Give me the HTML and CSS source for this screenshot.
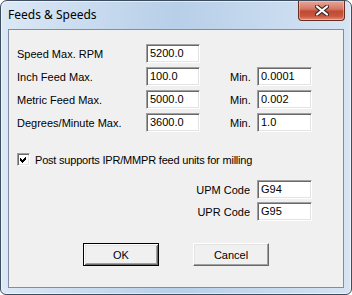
FILE: index.html
```html
<!DOCTYPE html>
<html>
<head>
<meta charset="utf-8">
<link rel="stylesheet" href="styles.css">
</head>
<body>
<div class="window">
  <div class="titlebar">
    <span class="title">Feeds &amp; Speeds</span>
    <div class="close">
      <svg width="14" height="11" viewBox="0 0 14 11">
        <path d="M2 1.5 L12 9.5 M12 1.5 L2 9.5" stroke="#3b2a26" stroke-width="4.2" stroke-linecap="round"/>
        <path d="M2 1.5 L12 9.5 M12 1.5 L2 9.5" stroke="#ffffff" stroke-width="2.2" stroke-linecap="round"/>
      </svg>
    </div>
  </div>
  <div class="client">
    <div class="form">
      <span class="label">Speed Max. RPM</span>
      <span class="edit">5200.0</span>
      <span></span><span></span><span></span>

      <span class="label">Inch Feed Max.</span>
      <span class="edit">100.0</span>
      <span></span>
      <span class="label">Min.</span>
      <span class="edit">0.0001</span>

      <span class="label">Metric Feed Max.</span>
      <span class="edit">5000.0</span>
      <span></span>
      <span class="label">Min.</span>
      <span class="edit">0.002</span>

      <span class="label">Degrees/Minute Max.</span>
      <span class="edit">3600.0</span>
      <span></span>
      <span class="label">Min.</span>
      <span class="edit">1.0</span>
    </div>

    <div class="check-row">
      <span class="checkbox">
        <svg width="9" height="9" viewBox="0 0 9 9" shape-rendering="crispEdges">
          <polygon points="1,3 3,5 7,1 7,4 3,8 1,6" fill="#000"/>
        </svg>
      </span>
      <span class="label check-label">Post supports IPR/MMPR feed units for milling</span>
    </div>

    <div class="codes">
      <span class="label">UPM Code</span>
      <span class="edit">G94</span>
      <span class="label">UPR Code</span>
      <span class="edit">G95</span>
    </div>

    <div class="buttons">
      <button class="btn default">OK</button>
      <button class="btn">Cancel</button>
    </div>
  </div>
</div>
</body>
</html>
```
FILE: styles.css
```css
html, body {
  margin: 0;
  padding: 0;
  background: #ffffff;
}

.window {
  box-sizing: border-box;
  width: 352px;
  height: 295px;
  border: 1px solid #3d4d60;
  border-radius: 7px 7px 6px 6px;
  background: linear-gradient(to right, #dce8f5 0%, #c9dbef 25%, #b7cfe8 50%, #c6d9ee 75%, #d6e4f3 100%);
  box-shadow: inset 0 0 0 1px rgba(255, 255, 255, 0.55);
  overflow: hidden;
}

.titlebar {
  height: 28px;
  display: flex;
  justify-content: space-between;
  align-items: flex-start;
}

.title {
  font-family: "Noto Sans", "Open Sans", sans-serif;
  font-size: 12px;
  color: #000;
  margin-left: 7px;
  margin-top: 6px;
  line-height: 16px;
}

.close {
  width: 45px;
  height: 19px;
  margin-right: 6px;
  border: 1px solid #6a2b20;
  border-top: none;
  border-radius: 0 0 4px 4px;
  background: linear-gradient(to bottom, #e8a597 0%, #d67a68 40%, #c24a35 55%, #c9563f 80%, #e1907b 100%);
  box-shadow: inset 0 0 0 1px rgba(255, 220, 210, 0.45);
  display: flex;
  align-items: center;
  justify-content: center;
}

.client {
  box-sizing: border-box;
  margin: 0 7px;
  height: 259px;
  border: 1px solid #7f8fa3;
  background: #f0f0f0;
  padding: 14px 0 0 8px;
  font-family: "Liberation Sans", Arial, sans-serif;
  font-size: 11px;
  color: #000;
}

.label {
  white-space: nowrap;
}

.check-label {
  letter-spacing: -0.2px;
}

.form {
  display: grid;
  grid-template-columns: 129px 54px 30px 27px 55px;
  grid-auto-rows: 19px;
  row-gap: 4px;
  align-items: center;
}

.edit {
  box-sizing: border-box;
  height: 19px;
  background: #fff;
  border-style: solid;
  border-width: 1px;
  border-color: #a0a0a0 #ffffff #ffffff #a0a0a0;
  box-shadow: inset 1px 1px 0 #696969, inset -1px -1px 0 #e3e3e3;
  padding: 0 3px;
  line-height: 17px;
  white-space: nowrap;
}

.check-row {
  display: flex;
  align-items: center;
  gap: 5px;
  margin-top: 21px;
  height: 13px;
}

.checkbox {
  box-sizing: border-box;
  width: 13px;
  height: 13px;
  background: #fff;
  border-style: solid;
  border-width: 1px;
  border-color: #a0a0a0 #ffffff #ffffff #a0a0a0;
  box-shadow: inset 1px 1px 0 #696969, inset -1px -1px 0 #e3e3e3;
  display: flex;
  align-items: center;
  justify-content: center;
}

.codes {
  display: grid;
  width: 295px;
  grid-template-columns: 1fr 55px;
  grid-auto-rows: 19px;
  column-gap: 7px;
  row-gap: 3px;
  align-items: center;
  justify-items: end;
  margin-top: 14px;
}

.codes .edit {
  justify-self: stretch;
}

.buttons {
  display: flex;
  justify-content: center;
  gap: 34px;
  margin-top: 22px;
  margin-left: -8px;
}

.btn {
  box-sizing: border-box;
  width: 76px;
  height: 23px;
  padding: 0;
  font-family: "Liberation Sans", Arial, sans-serif;
  font-size: 11px;
  color: #000;
  background: #f0f0f0;
  border-style: solid;
  border-width: 1px;
  border-color: #ffffff #696969 #696969 #ffffff;
  box-shadow: inset -1px -1px 0 #a0a0a0, inset 1px 1px 0 #e3e3e3;
}

.btn.default {
  border-color: #000;
  box-shadow: inset 1px 1px 0 #ffffff, inset -1px -1px 0 #696969, inset 2px 2px 0 #e3e3e3, inset -2px -2px 0 #a0a0a0;
}
```
